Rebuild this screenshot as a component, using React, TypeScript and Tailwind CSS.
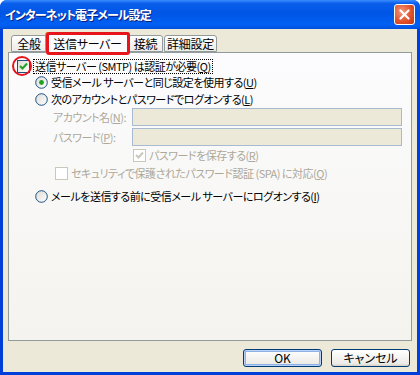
import React from "react";

const font = "font-['Noto_Sans_CJK_JP','Noto_Sans',sans-serif] [font-feature-settings:'palt']";

function Check({ checked, disabled }: { checked?: boolean; disabled?: boolean }) {
  return (
    <div
      className={
        "w-[13px] h-[13px] shrink-0 border flex items-center justify-center " +
        (disabled
          ? "border-[#CAC8BB] bg-white"
          : "border-[#1C5180] bg-[linear-gradient(135deg,#DCDBD5,#FFFFFF)]")
      }
    >
      {checked && (
        <svg width="9" height="9" viewBox="0 0 9 9">
          <path
            d="M1 4 L3.5 6.5 L8 1.5"
            fill="none"
            stroke={disabled ? "#CAC8BB" : "#21A121"}
            strokeWidth="2"
          />
        </svg>
      )}
    </div>
  );
}

function Radio({ checked }: { checked?: boolean }) {
  return (
    <svg width="13" height="13" viewBox="0 0 13 13" className="shrink-0">
      <defs>
        <linearGradient id="rg" x1="0" y1="0" x2="1" y2="1">
          <stop offset="0" stopColor="#DCDBD5" />
          <stop offset="1" stopColor="#FFFFFF" />
        </linearGradient>
      </defs>
      <circle cx="6.5" cy="6.5" r="5.8" fill="url(#rg)" stroke="#1C5180" strokeWidth="1" />
      {checked && <circle cx="6.5" cy="6.5" r="2.4" fill="#21A121" />}
    </svg>
  );
}

function Tab({ label, selected, w }: { label: string; selected?: boolean; w: string }) {
  return (
    <div
      className={
        "flex items-center justify-center border border-[#919B9C] rounded-t-[3px] text-[12px] tracking-[-0.3px] text-black whitespace-nowrap " +
        w +
        (selected
          ? " h-[21px] -mx-[2px] z-10 border-b-0 bg-[#FCFCFE] mb-[-1px] border-t-[#E68B2C] border-t-[2px]"
          : " h-[17px] bg-[linear-gradient(to_bottom,#FFFFFF,#ECEBE6)]")
      }
    >
      {label}
    </div>
  );
}

export default function App() {
  return (
    <div className={"w-[420px] h-[375px] flex flex-col bg-[#0040D8] rounded-t-[7px] overflow-hidden " + font}>
      {/* title bar */}
      <div className="h-[29px] shrink-0 flex items-center justify-between pl-[5px] pr-[5px] bg-[linear-gradient(to_bottom,#3A8CFF_0%,#0A5EEB_12%,#0055E5_45%,#0160F3_85%,#0050DC_100%)]">
        <span className="text-white font-bold text-[12px] tracking-[-0.9px] [text-shadow:1px_1px_0_#0A1E82]">
          インターネット電子メール設定
        </span>
        <div className="w-[21px] h-[21px] rounded-[3px] border border-white bg-[radial-gradient(circle_at_35%_35%,#F09A7E,#E0532C_55%,#C2350F)] flex items-center justify-center">
          <svg width="11" height="11" viewBox="0 0 11 11">
            <path d="M1.5 1.5 L9.5 9.5 M9.5 1.5 L1.5 9.5" stroke="white" strokeWidth="2.2" strokeLinecap="round" />
          </svg>
        </div>
      </div>

      {/* body */}
      <div className="flex-1 mx-[3px] mb-[3px] bg-[#ECE9D8] flex flex-col pt-[4px] px-[5px] relative">
        {/* tabs */}
        <div className="flex items-end h-[19px] pl-[3px] relative z-10">
          <Tab label="全般" w="w-[36px]" />
          <Tab label="送信サーバー" selected w="w-[85px]" />
          <Tab label="接続" w="w-[35px]" />
          <div className="w-[1px]" />
          <Tab label="詳細設定" w="w-[53px]" />
        </div>

        {/* panel */}
        <div className="h-[289px] border border-[#919B9C] bg-[linear-gradient(to_bottom,#FCFCFE,#F4F3EE)] text-[11px] tracking-[-0.5px] text-black flex flex-col whitespace-nowrap">
          <div className="mt-[5px] h-[16px] flex items-center pl-[8px] gap-[3px]">
            <Check checked />
            <span className="border border-dotted border-black px-[1px] leading-[13px]">
              送信サーバー (SMTP) は認証が必要(<u>Q</u>)
            </span>
          </div>
          <div className="h-[16px] flex items-center pl-[26px] gap-[3px]">
            <Radio checked />
            <span>受信メール サーバーと同じ設定を使用する(<u>U</u>)</span>
          </div>
          <div className="mt-[1px] h-[16px] flex items-center pl-[26px] gap-[3px]">
            <Radio />
            <span>次のアカウントとパスワードでログオンする(<u>L</u>)</span>
          </div>
          <div className="mt-[1px] h-[18px] flex items-center pl-[44px] pr-[9px] text-[#ACA899]">
            <span className="w-[79px]">アカウント名(<u>N</u>):</span>
            <div className="flex-1 h-[18px] border border-[#A7BAD0] bg-[#ECE9D8]" />
          </div>
          <div className="mt-[2px] h-[18px] flex items-center pl-[44px] pr-[9px] text-[#ACA899]">
            <span className="w-[79px]">パスワード(<u>P</u>):</span>
            <div className="flex-1 h-[18px] border border-[#A7BAD0] bg-[#ECE9D8]" />
          </div>
          <div className="mt-[2px] h-[15px] flex items-center pl-[124px] gap-[3px] text-[#ACA899]">
            <Check checked disabled />
            <span>パスワードを保存する(<u>R</u>)</span>
          </div>
          <div className="mt-[2px] h-[16px] flex items-center pl-[46px] gap-[3px] text-[#ACA899]">
            <Check disabled />
            <span>セキュリティで保護されたパスワード認証 (SPA) に対応(<u>Q</u>)</span>
          </div>
          <div className="mt-[7px] h-[16px] flex items-center pl-[26px] gap-[3px]">
            <Radio />
            <span>メールを送信する前に受信メール サーバーにログオンする(<u>I</u>)</span>
          </div>
        </div>

        {/* buttons */}
        <div className="flex justify-end gap-[9px] mt-[8px] pr-[2px]">
          <button className="w-[79px] h-[18px] rounded-[3px] border border-[#003C74] bg-[linear-gradient(to_bottom,#FFFFFF,#ECEBE6_85%,#D6D0C5)] text-[12px] text-black shadow-[inset_0_0_0_1px_#B9D1FA,inset_0_0_0_2px_#8DB2E3] flex items-center justify-center">
            OK
          </button>
          <button className="w-[79px] h-[18px] rounded-[3px] border border-[#003C74] bg-[linear-gradient(to_bottom,#FFFFFF,#ECEBE6_85%,#D6D0C5)] text-[12px] text-black flex items-center justify-center">
            キャンセル
          </button>
        </div>

        {/* annotations */}
        <div className="absolute left-[43px] top-[3px] w-[84px] h-[23px] border-[3px] border-[#E8141B] rounded-[3px] z-20" />
        <div className="absolute left-[9px] top-[27px] w-[20px] h-[20px] border-[2px] border-[#E8141B] rounded-full z-20" />
      </div>
    </div>
  );
}
